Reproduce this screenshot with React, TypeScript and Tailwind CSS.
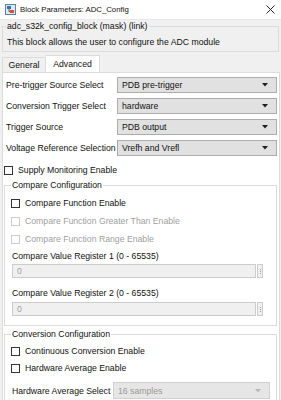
import React from 'react';

const Arrow = ({ disabled }: { disabled?: boolean }) => (
  <svg width="6" height="4" viewBox="0 0 6 4" className="shrink-0">
    <path d="M0 0h6L3 3.5z" fill={disabled ? '#b8b8b8' : '#202020'} />
  </svg>
);

const Select = ({ value, disabled, className }: { value: string; disabled?: boolean; className: string }) => (
  <div
    className={`flex items-center justify-between pl-[4px] pr-[8px] border ${
      disabled ? 'bg-[#e6e6e6] border-[#cfcfcf] text-[#9a9a9a]' : 'bg-[#e1e1e1] border-[#adadad] text-[#111]'
    } ${className}`}
  >
    <span>{value}</span>
    <Arrow disabled={disabled} />
  </div>
);

const Check = ({ label, disabled }: { label: string; disabled?: boolean }) => (
  <div className={`flex items-center h-[12px] gap-[5px] ${disabled ? 'text-[#a0a0a0]' : 'text-[#111]'}`}>
    <div className={`w-[9px] h-[9px] bg-white border ${disabled ? 'border-[#cccccc]' : 'border-[#333]'}`} />
    <span>{label}</span>
  </div>
);

const NumField = ({ className }: { className: string }) => (
  <div className={`flex items-stretch h-[14px] ml-[1px] mr-[7px] ${className}`}>
    <div className="flex-1 flex items-center pl-[4px] bg-[#f0f0f0] border border-[#cccccc] text-[#a0a0a0]">0</div>
    <div className="w-[6px] ml-[1px] border border-[#cccccc] bg-[#f0f0f0] flex flex-col items-center justify-center gap-[1px]">
      <div className="w-[1px] h-[1px] bg-[#999]" />
      <div className="w-[1px] h-[1px] bg-[#999]" />
      <div className="w-[1px] h-[1px] bg-[#999]" />
    </div>
  </div>
);

const Row = ({ label, value, className }: { label: string; value: string; className?: string }) => (
  <div className={`flex items-center h-[16px] ${className ?? ''}`}>
    <span className="w-[114px] pl-[3px] whitespace-nowrap">{label}</span>
    <Select value={value} className="w-[160px] h-[16px]" />
  </div>
);

export default function App() {
  return (
    <div className="w-[281px] h-[400px] overflow-hidden bg-[#f0f0f0] text-[8.7px] leading-[12px] text-[#111] [font-family:'Liberation_Sans',Arial,sans-serif]">
      {/* title bar */}
      <div className="h-[20px] bg-white flex items-center border-b border-[#e8e8e8]">
        <svg width="11" height="11" viewBox="0 0 11 11" className="ml-[5px]">
          <rect x="0.5" y="0.5" width="10" height="10" fill="#dfe9f3" stroke="#5a7fa8" />
          <rect x="2" y="2" width="4" height="3" fill="#3a6ea5" />
          <rect x="5" y="6" width="4" height="3" fill="#d9532c" />
          <path d="M4 5v2.5h1" stroke="#333" fill="none" strokeWidth="0.8" />
        </svg>
        <span className="ml-[4px] text-[7.8px]">Block Parameters: ADC_Config</span>
        <svg width="9" height="9" viewBox="0 0 9 9" className="ml-auto mr-[6px]">
          <path d="M0.5 0.5l8 8M8.5 0.5l-8 8" stroke="#222" strokeWidth="1" />
        </svg>
      </div>

      {/* mask description */}
      <fieldset className="mx-[2px] mt-[0px] px-[3px] pb-[3px] border border-[#dcdcdc]">
        <legend className="px-[1px]">adc_s32k_config_block (mask) (link)</legend>
        <div className="pt-[4px] pl-[1px]">This block allows the user to configure the ADC module</div>
      </fieldset>

      {/* tabs */}
      <div className="flex items-end mt-[3px] pl-[2px] h-[17px]">
        <div className="h-[15px] w-[44px] flex items-center justify-center border border-b-0 border-[#dcdcdc] bg-[#f0f0f0]">
          General
        </div>
        <div className="h-[17px] w-[54px] flex items-center justify-center border border-b-0 border-l-0 border-[#dcdcdc] bg-white">
          Advanced
        </div>
      </div>

      {/* tab panel */}
      <div className="ml-[2px] mr-[1px] h-[400px] bg-white border border-[#dcdcdc] pt-[4px]">
        <Row label="Pre-trigger Source Select" value="PDB pre-trigger" />
        <Row label="Conversion Trigger Select" value="hardware" className="mt-[5px]" />
        <Row label="Trigger Source" value="PDB output" className="mt-[5px]" />
        <Row label="Voltage Reference Selection" value="Vrefh and Vrefl" className="mt-[5px]" />

        <div className="mt-[8px] ml-[1px]">
          <Check label="Supply Monitoring Enable" />
        </div>

        <fieldset className="mt-[3px] ml-[1px] mr-[2px] px-[6px] pb-[9px] border border-[#dcdcdc]">
          <legend className="px-[1px]">Compare Configuration</legend>
          <div className="pt-[6px] flex flex-col gap-[6px]">
            <Check label="Compare Function Enable" />
            <Check label="Compare Function Greater Than Enable" disabled />
            <Check label="Compare Function Range Enable" disabled />
          </div>
          <div className="mt-[5px] ml-[1px]">Compare Value Register 1 (0 - 65535)</div>
          <NumField className="mt-[2px]" />
          <div className="mt-[9px] ml-[1px]">Compare Value Register 2 (0 - 65535)</div>
          <NumField className="mt-[3px]" />
        </fieldset>

        <fieldset className="mt-[2px] ml-[1px] mr-[2px] px-[6px] pb-[6px] border border-[#dcdcdc]">
          <legend className="px-[1px]">Conversion Configuration</legend>
          <div className="pt-[5px] flex flex-col gap-[5px]">
            <Check label="Continuous Conversion Enable" />
            <Check label="Hardware Average Enable" />
          </div>
          <div className="mt-[8px] flex items-center">
            <span className="w-[102px] pl-[1px]">Hardware Average Select</span>
            <Select value="16 samples" disabled className="w-[157px] h-[17px]" />
          </div>
        </fieldset>
      </div>
    </div>
  );
}
